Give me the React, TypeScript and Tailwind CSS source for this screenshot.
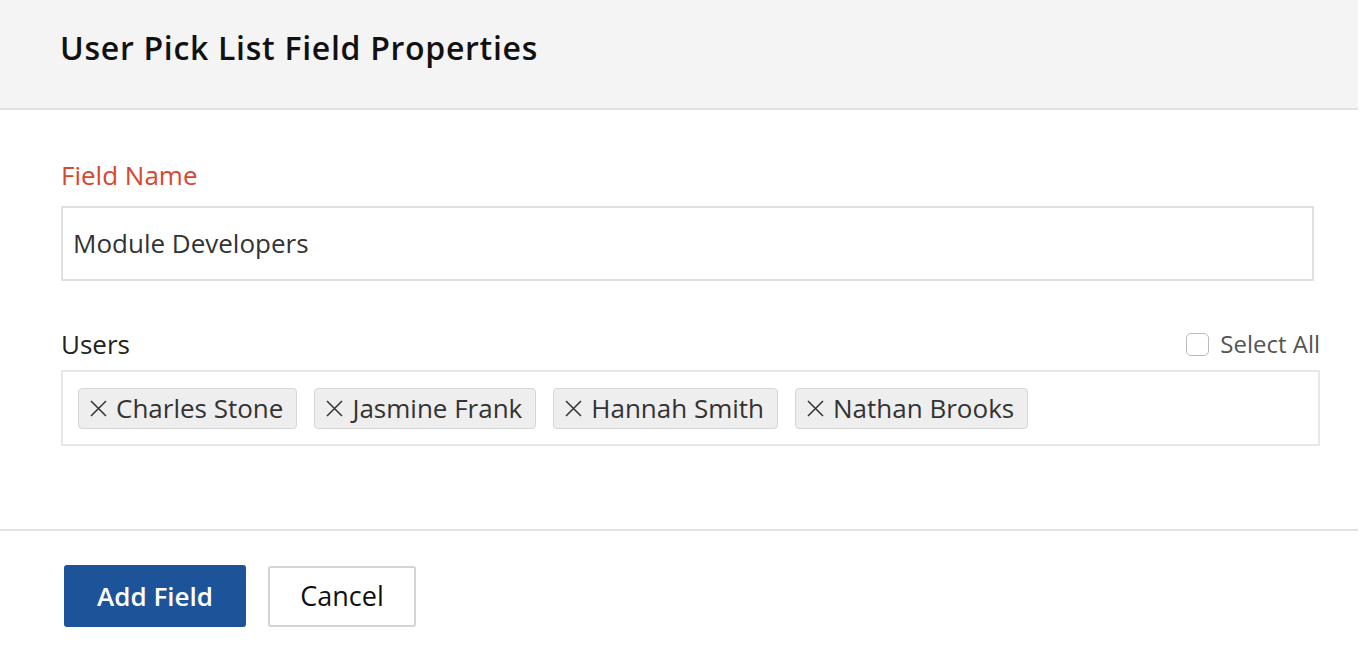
import React from "react";

const users = ["Charles Stone", "Jasmine Frank", "Hannah Smith", "Nathan Brooks"];

function XIcon() {
  return (
    <svg width="19" height="19" viewBox="0 0 19 19" className="shrink-0">
      <path d="M2 2 L17 17 M17 2 L2 17" stroke="#333" strokeWidth="1.5" fill="none" />
    </svg>
  );
}

export default function App() {
  return (
    <div
      className="w-[1360px] h-[659px] bg-white overflow-hidden"
      style={{ fontFamily: "'Open Sans', 'Noto Sans', sans-serif" }}
    >
      <div className="w-[1358px] h-[110px] bg-[#f4f4f4] border-b-2 border-[#e2e2e2] flex items-center pl-[60px] pb-[12px]">
        <h1 className="text-[32px] font-semibold text-[#111] tracking-[0.7px]">User Pick List Field Properties</h1>
      </div>

      <div className="pl-[61px] pt-[50px]">
        <div className="text-[26px] leading-[30px] text-[#d8472c]">Field Name</div>
        <div className="mt-[16px] w-[1253px] h-[75px] border-2 border-[#e0e0e0] flex items-center pl-[10px]">
          <span className="text-[26px] text-[#333]">Module Developers</span>
        </div>

        <div className="mt-[48px] h-[30px] w-[1259px] flex items-center justify-between">
          <span className="text-[26px] leading-[30px] text-[#222]">Users</span>
          <label className="flex items-center gap-[11px]">
            <span className="w-[23px] h-[23px] rounded-[5px] border border-[#bbb] bg-white" />
            <span className="text-[24px] leading-[28px] text-[#555]">Select All</span>
          </label>
        </div>
        <div className="mt-[11px] w-[1259px] h-[76px] border-2 border-[#e8e8e8] flex items-center pl-[15px] gap-[17px]">
          {users.map((u) => (
            <div
              key={u}
              className="h-[41px] flex items-center gap-[8px] pl-[10px] pr-[13px] bg-[#eeeeee] border border-[#d6d6d6] rounded-[4px]"
            >
              <XIcon />
              <span className="text-[26px] text-[#333] leading-none">{u}</span>
            </div>
          ))}
        </div>
      </div>

      <div className="mt-[83px] w-[1358px] h-[2px] bg-[#e2e2e2]" />

      <div className="pl-[64px] pt-[34px] flex items-center gap-[22px]">
        <button className="w-[182px] h-[62px] rounded-[3px] bg-[#1d5499] text-white text-[26px] font-semibold">
          Add Field
        </button>
        <button className="w-[148px] h-[61px] rounded-[3px] border-2 border-[#d4d4d4] bg-white text-[#111] text-[27px]">
          Cancel
        </button>
      </div>
    </div>
  );
}
